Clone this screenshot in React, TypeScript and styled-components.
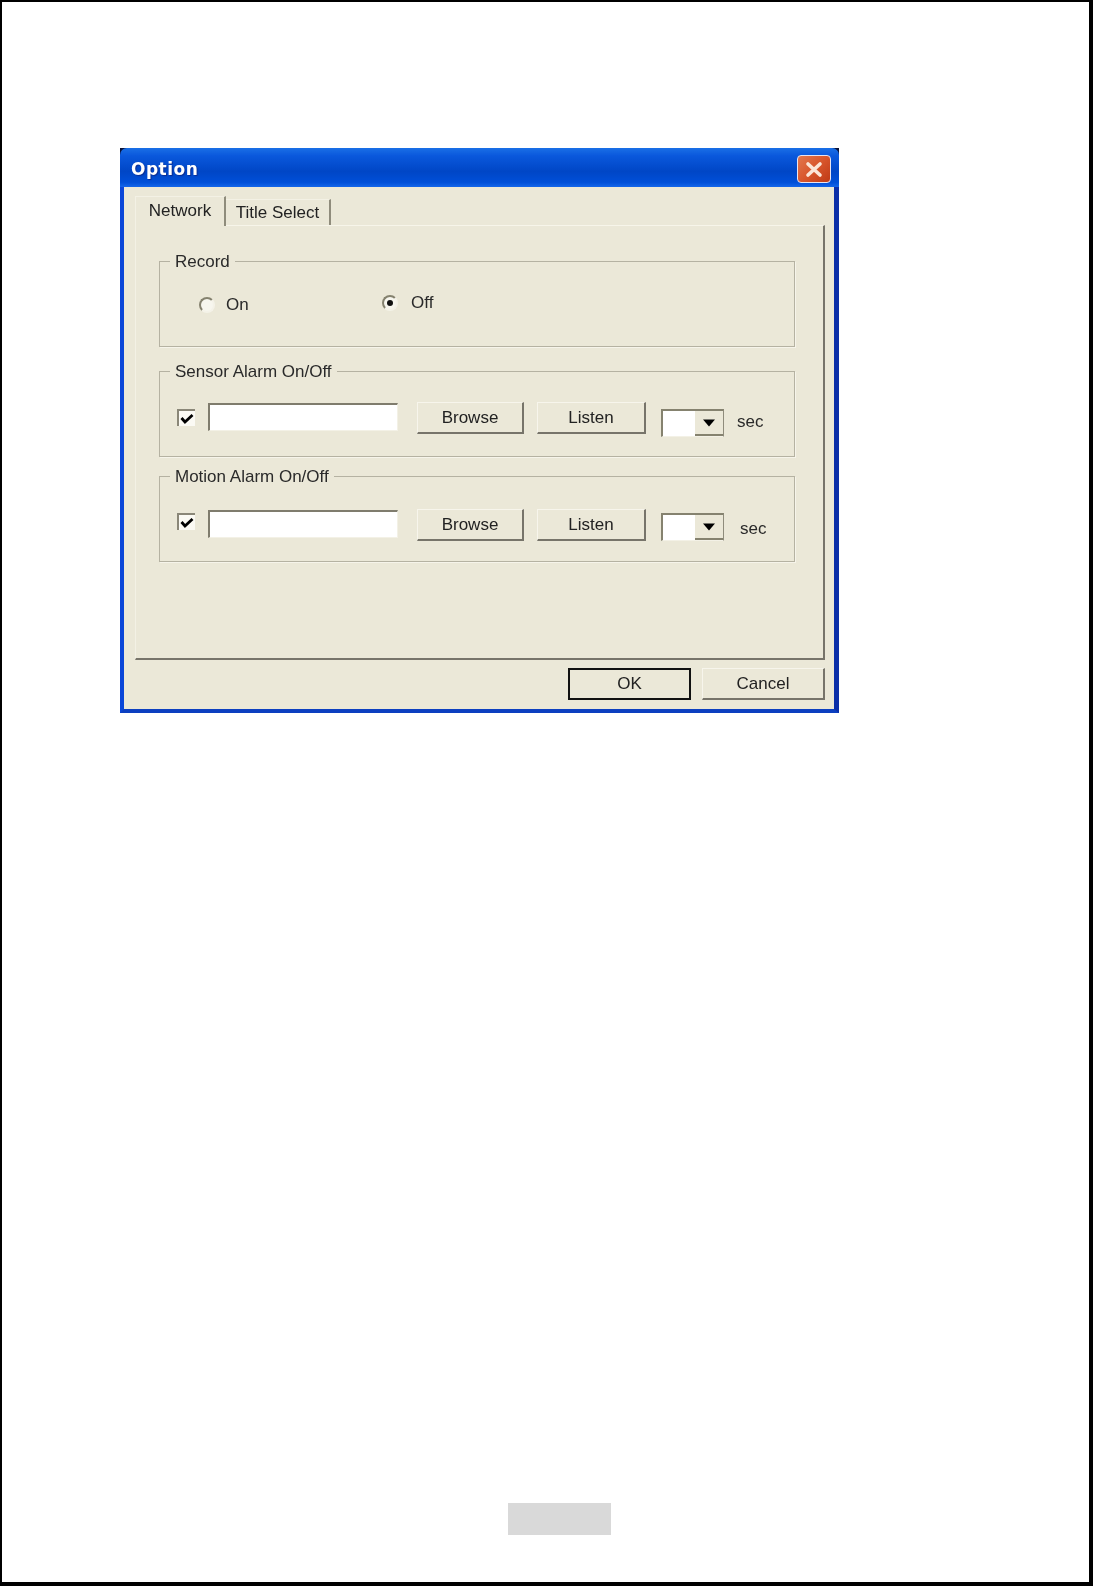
import * as React from "react";
import styled, { createGlobalStyle } from "styled-components";

const FONT = `"Liberation Sans", Arial, sans-serif`;

const GlobalStyle = createGlobalStyle`
  html, body {
    margin: 0;
    padding: 0;
    background: #fff;
  }
  * {
    box-sizing: border-box;
  }
`;

export default function App() {
  return (
    <>
      <GlobalStyle />
      <Page>
        <Dialog>
          <TitleBar>
            <TitleText>Option</TitleText>
            <CloseButton>
              <svg width="20" height="17" viewBox="0 0 20 17">
                <path
                  d="M4 3 L16 14 M16 3 L4 14"
                  stroke="#fbe6d8"
                  strokeWidth="3.6"
                  strokeLinecap="round"
                  fill="none"
                />
              </svg>
            </CloseButton>
          </TitleBar>
          <WindowBody>
            <TabStrip>
              <ActiveTab>Network</ActiveTab>
              <InactiveTab>Title Select</InactiveTab>
            </TabStrip>
            <TabPanel>
              <GroupBox $height={86}>
                <Legend>Record</Legend>
                <RadioRow>
                  <RadioOption $top={33} $gap={11}>
                    <Radio />
                    On
                  </RadioOption>
                  <RadioOption $top={28} $gap={13}>
                    <Radio $checked />
                    Off
                  </RadioOption>
                </RadioRow>
              </GroupBox>
              <AlarmGroup
                title="Sensor Alarm On/Off"
                gap={24}
                rowTop={30}
                checkTop={7}
                comboTop={7}
                secGap={13}
              />
              <AlarmGroup
                title="Motion Alarm On/Off"
                gap={19}
                rowTop={32}
                checkTop={4}
                comboTop={4}
                secGap={16}
              />
            </TabPanel>
            <DialogActions>
              <ActionButton $isDefault>OK</ActionButton>
              <ActionButton>Cancel</ActionButton>
            </DialogActions>
          </WindowBody>
        </Dialog>
        <PageNumberBox />
      </Page>
    </>
  );
}

interface AlarmGroupProps {
  title: string;
  gap: number;
  rowTop: number;
  checkTop: number;
  comboTop: number;
  secGap: number;
}

function AlarmGroup({
  title,
  gap,
  rowTop,
  checkTop,
  comboTop,
  secGap,
}: AlarmGroupProps) {
  return (
    <GroupBox $height={86} $gap={gap}>
      <Legend>{title}</Legend>
      <AlarmRow $top={rowTop}>
        <CheckBox $top={checkTop}>
          <svg width="14" height="12" viewBox="0 0 14 12">
            <path
              d="M1.5 5 L5 9 L12.5 2"
              stroke="#000"
              strokeWidth="2.8"
              fill="none"
            />
          </svg>
        </CheckBox>
        <TextField />
        <RowButton $width={107} $left={19}>
          Browse
        </RowButton>
        <RowButton $width={109} $left={13}>
          Listen
        </RowButton>
        <ComboBox $top={comboTop}>
          <ComboArrow>
            <svg width="14" height="8" viewBox="0 0 14 8">
              <path d="M1 0.5 H13 L7 7.5 Z" fill="#000" />
            </svg>
          </ComboArrow>
        </ComboBox>
        <SecLabel $left={secGap}>sec</SecLabel>
      </AlarmRow>
    </GroupBox>
  );
}

const Page = styled.div`
  width: 1093px;
  height: 1586px;
  display: flex;
  flex-direction: column;
  align-items: flex-start;
  padding: 146px 0 47px 118px;
  background: #fff;
  border-style: solid;
  border-color: #000;
  border-width: 2px 4px 4px 2px;
  font-family: ${FONT};
`;

const Dialog = styled.div`
  width: 719px;
  height: 565px;
  display: flex;
  flex-direction: column;
  background: #0a1238;
  filter: blur(0.55px);
`;

const TitleBar = styled.div`
  height: 39px;
  flex: none;
  display: flex;
  align-items: center;
  justify-content: space-between;
  padding: 0 8px 0 11px;
  border-radius: 7px 7px 0 0;
  background: linear-gradient(
    180deg,
    #1a6fe6 0,
    #0a58dc 20%,
    #0046c6 60%,
    #004fd8 88%,
    #1466ea 100%
  );
`;

const TitleText = styled.span`
  padding-top: 3px;
  font-family: "DejaVu Sans", sans-serif;
  font-size: 17px;
  font-weight: 700;
  letter-spacing: 0.5px;
  color: #fff;
  text-shadow: 1px 1px 1px #0a2c90;
`;

const CloseButton = styled.div`
  width: 34px;
  height: 28px;
  margin-top: 3px;
  display: flex;
  align-items: center;
  justify-content: center;
  border: 1.5px solid #e8e4f0;
  border-radius: 4px;
  background: linear-gradient(135deg, #e2784e 0, #d8562c 50%, #bf3a16 100%);
`;

const WindowBody = styled.div`
  flex: 1;
  display: flex;
  flex-direction: column;
  background: #ebe8d8;
  border-style: solid;
  border-width: 0 5px 4px 4px;
  border-color: #0a3cc8 #0a2ea8 #0c3fc0 #0a46d8;
`;

const TabStrip = styled.div`
  height: 38px;
  flex: none;
  display: flex;
  align-items: flex-end;
  padding-left: 11px;
`;

const TabLabel = styled.div`
  display: flex;
  justify-content: center;
  font-size: 17px;
  line-height: 20px;
  color: #222;
  border-right: 2px solid #8f8c7c;
`;

const ActiveTab = styled(TabLabel)`
  width: 91px;
  height: 30px;
  padding: 4px 0 0 0;
  margin-bottom: -1px;
  position: relative;
  z-index: 1;
  background: #ebe8d8;
  border-left: 1px solid #f3f1e5;
  border-top: 1px solid #f3f1e5;
`;

const InactiveTab = styled(TabLabel)`
  width: 105px;
  height: 26px;
  padding-top: 3px;
  border-top: 1px solid #f3f1e5;
`;

const TabPanel = styled.div`
  height: 435px;
  width: 690px;
  flex: none;
  margin-left: 11px;
  padding: 35px 0 0 23px;
  border-style: solid;
  border-width: 1px 2px 2px 1px;
  border-color: #f7f5ea #77746a #77746a #f3f1e5;
`;

const GroupBox = styled.div<{ $height: number; $gap?: number }>`
  position: relative;
  width: 636px;
  height: ${(p) => p.$height}px;
  margin-top: ${(p) => p.$gap ?? 0}px;
  border: 1px solid #b5b2a2;
  box-shadow: 1px 1px 0 #f6f4ea;
`;

const Legend = styled.span`
  position: absolute;
  top: -10px;
  left: 10px;
  padding: 0 5px;
  font-size: 17px;
  line-height: 19px;
  color: #2a2a2a;
  background: #ebe8d8;
`;

const RadioRow = styled.div`
  display: grid;
  grid-template-columns: 183px 1fr;
  padding: 1px 0 0 39px;
`;

const RadioOption = styled.div<{ $top: number; $gap: number }>`
  display: flex;
  align-items: center;
  gap: ${(p) => p.$gap}px;
  margin-top: ${(p) => p.$top}px;
  font-size: 17px;
  line-height: 18px;
  color: #2a2a2a;
`;

const Radio = styled.span<{ $checked?: boolean }>`
  width: 16px;
  height: 16px;
  flex: none;
  display: flex;
  align-items: center;
  justify-content: center;
  border-radius: 50%;
  border: 2px solid;
  border-color: #85826f #f4f2e8 #f4f2e8 #85826f;
  background: #f7f6ee;

  &::after {
    content: "";
    width: 6px;
    height: 6px;
    border-radius: 50%;
    background: ${(p) => (p.$checked ? "#111" : "transparent")};
  }
`;

const AlarmRow = styled.div<{ $top: number }>`
  display: flex;
  align-items: flex-start;
  padding: ${(p) => p.$top}px 0 0 17px;
`;

const CheckBox = styled.div<{ $top: number }>`
  width: 18px;
  height: 17px;
  margin-top: ${(p) => p.$top}px;
  display: flex;
  align-items: center;
  justify-content: center;
  background: #fbfaf4;
  border-style: solid;
  border-width: 2px 0 0 2px;
  border-color: #8a8778;
`;

const TextField = styled.div`
  width: 190px;
  height: 28px;
  margin: 1px 0 0 13px;
  background: #fff;
  border-style: solid;
  border-width: 2px 1px 1px 2px;
  border-color: #7f7c6d #f3f1e6 #f3f1e6 #7f7c6d;
`;

const Raised = styled.div`
  display: flex;
  align-items: center;
  justify-content: center;
  font-size: 17px;
  color: #222;
  border-style: solid;
  border-width: 1px 2px 2px 1px;
  border-color: #f7f5ec #77746a #77746a #f7f5ec;
`;

const RowButton = styled(Raised)<{ $width: number; $left: number }>`
  width: ${(p) => p.$width}px;
  height: 32px;
  margin-left: ${(p) => p.$left}px;
`;

const ComboBox = styled.div<{ $top: number }>`
  width: 63px;
  height: 28px;
  margin: ${(p) => p.$top}px 0 0 15px;
  display: flex;
  justify-content: flex-end;
  background: #fff;
  border-style: solid;
  border-width: 2px 1px 1px 2px;
  border-color: #85826f #8f8c7c #f3f1e6 #85826f;
`;

const ComboArrow = styled.div`
  width: 28px;
  display: flex;
  align-items: center;
  justify-content: center;
  background: #ebe8d8;
  border-bottom: 2px solid #85826f;
`;

const SecLabel = styled.span<{ $left: number }>`
  margin: 11px 0 0 ${(p) => p.$left}px;
  font-size: 17px;
  line-height: 18px;
  color: #2a2a2a;
`;

const DialogActions = styled.div`
  display: flex;
  justify-content: flex-end;
  gap: 11px;
  padding: 8px 9px 0 0;
`;

const ActionButton = styled(Raised)<{ $isDefault?: boolean }>`
  width: 123px;
  height: 32px;
  ${(p) => p.$isDefault && "border: 2px solid #111;"}
`;

const PageNumberBox = styled.div`
  width: 103px;
  height: 32px;
  margin: auto 0 0 388px;
  background: #d9d9d9;
`;
